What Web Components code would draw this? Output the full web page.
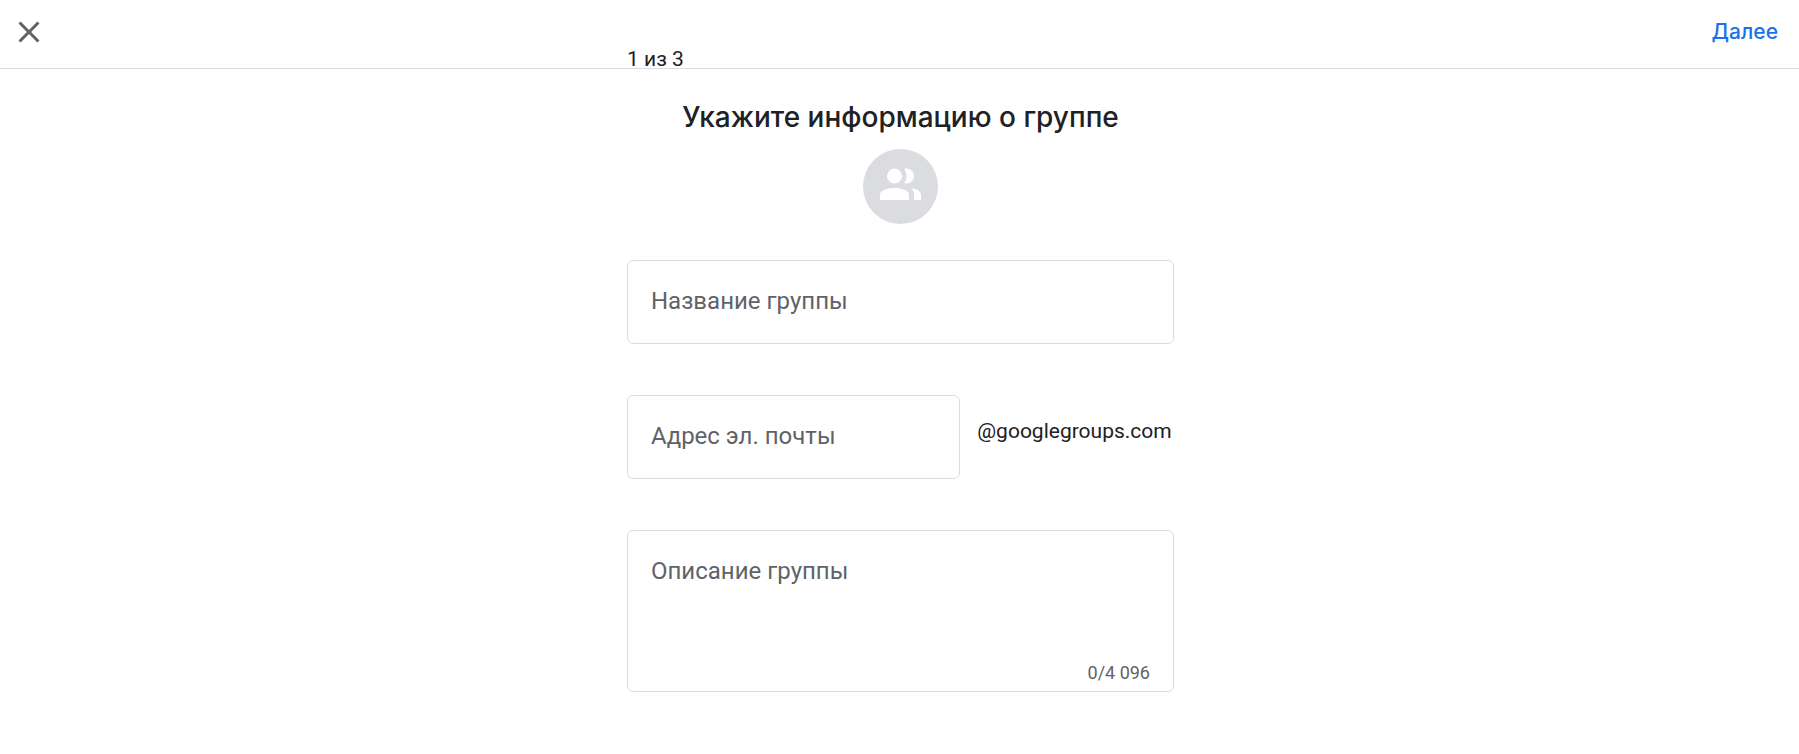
<!DOCTYPE html>
<html lang="ru">
<head>
<meta charset="utf-8">
<meta name="viewport" content="width=device-width, initial-scale=1">
<title>Создание группы</title>
<style>
  :root {
    --column: 547px;
    --line: #dadce0;
    --muted: #5f6368;
    --text: #202124;
    --accent: #1a73e8;
    --display: Inter, "Liberation Sans", sans-serif;
  }
  body { margin: 0; background: #fff; color: var(--text); font-family: Roboto, "Liberation Sans", sans-serif; }
</style>
</head>
<body>
<group-wizard></group-wizard>

<template id="group-wizard">
  <style>
    :host { display: block; }
    main { display: flex; flex-direction: column; align-items: center; padding: 28px 24px 60px 26px; }
    h1 { margin: 0; font: 500 28px/40px var(--display); text-align: center; }
    group-avatar { margin-top: 12px; }
    form { display: flex; flex-direction: column; gap: 51px; width: 100%; max-width: var(--column); margin-top: 36px; }
    .mail { display: flex; gap: 15px; }
    .mail form-field { flex: 1; }
    .suffix { flex: 0 0 199px; text-align: center; font-size: 21px; line-height: 24px; margin-top: 24px; }
  </style>
  <wizard-header>1 из 3</wizard-header>
  <main>
    <h1>Укажите информацию о группе</h1>
    <group-avatar></group-avatar>
    <form>
      <form-field label="Название группы"></form-field>
      <div class="mail">
        <form-field label="Адрес эл. почты"></form-field>
        <span class="suffix">@googlegroups.com</span>
      </div>
      <form-field label="Описание группы" multiline>0/4 096</form-field>
    </form>
  </main>
</template>

<template id="wizard-header">
  <style>
    :host { display: grid; grid-template-columns: 1fr minmax(0, var(--column)) 1fr; height: 68px; border-bottom: 1px solid var(--line); }
    button { border: 0; background: none; padding: 0; cursor: pointer; }
    .close { justify-self: start; align-self: start; margin: 14px 11px; width: 36px; height: 36px; color: var(--muted); }
    .close svg { display: block; width: 36px; height: 36px; }
    .step { align-self: end; padding-left: 1px; font-size: 21px; line-height: 18px; white-space: nowrap; }
    .next { justify-self: end; align-self: start; margin: 20px 21px; font: 500 21px/24px var(--display); color: var(--accent); }
  </style>
  <button class="close" type="button" aria-label="Закрыть">
    <svg viewBox="0 0 24 24" fill="currentColor" aria-hidden="true"><path d="M19 6.41L17.59 5 12 10.59 6.41 5 5 6.41 10.59 12 5 17.59 6.41 19 12 13.41 17.59 19 19 17.59 13.41 12z"/></svg>
  </button>
  <div class="step"><slot></slot></div>
  <button class="next" type="button">Далее</button>
</template>

<template id="group-avatar">
  <style>
    :host { display: block; width: 75px; height: 75px; }
    svg { display: block; width: 100%; height: 100%; }
  </style>
  <svg viewBox="0 0 75 75" aria-hidden="true">
    <circle cx="37.500" cy="37.500" r="37.500" fill="#dadce0"/>
    <g fill="#fff">
      <circle cx="31.500" cy="27" r="7.500"/>
      <path d="M41.200 19.900C42 19.600 42.800 19.500 43.500 19.500a7.500 7.500 0 0 1 0 15c-.7 0-1.500-.1-2.300-.4a12 12 0 0 0 0-14.200z"/>
      <path d="M17 51v-5.500C17 41.300 24.500 39 31.500 39S46 41.300 46 45.500V51z"/>
      <path d="M48.500 39.200C54 40 58 42.400 58 45.800V51h-7v-5c0-2.800-.9-5-2.500-6.800z"/>
    </g>
  </svg>
</template>

<template id="form-field">
  <style>
    :host { display: grid; grid-template: 82px / 1fr; border: 1px solid var(--line); border-radius: 6px; min-width: 0; }
    :host([multiline]) { grid-template-rows: 124px 36px; }
    label, input, textarea { grid-area: 1 / 1; padding: 26px 23px; font: 24px/28px Roboto, "Liberation Sans", sans-serif; }
    label { z-index: 1; pointer-events: none; color: var(--muted); }
    input, textarea { display: block; box-sizing: border-box; width: 100%; height: 100%; margin: 0; border: 0; outline: 0; resize: none; background: none; color: inherit; overflow: hidden; }
    :host([filled]) label { visibility: hidden; }
    .counter { grid-row: 2; justify-self: end; padding: 6px 23px 0; font-size: 18px; line-height: 24px; color: var(--muted); }
    :host(:not([multiline])) .counter { display: none; }
  </style>
  <label for="control"></label>
  <div class="counter"><slot></slot></div>
</template>

<script>
  class TemplateElement extends HTMLElement {
    constructor() {
      super();
      this.attachShadow({ mode: "open" });
      this.shadowRoot.append(document.getElementById(this.localName).content.cloneNode(true));
    }
  }

  class FormField extends TemplateElement {
    connectedCallback() {
      if (this.control) return;
      const label = this.shadowRoot.querySelector("label");
      label.textContent = this.getAttribute("label");
      this.control = document.createElement(this.hasAttribute("multiline") ? "textarea" : "input");
      this.control.id = "control";
      if (this.hasAttribute("multiline")) this.control.maxLength = 4096;
      this.control.addEventListener("input", () => {
        this.toggleAttribute("filled", this.control.value !== "");
        if (this.hasAttribute("multiline")) this.textContent = this.control.value.length + "/4 096";
      });
      label.after(this.control);
    }
  }

  customElements.define("form-field", FormField);
  customElements.define("group-avatar", class extends TemplateElement {});
  customElements.define("wizard-header", class extends TemplateElement {});
  customElements.define("group-wizard", class extends TemplateElement {});
</script>
</body>
</html>
